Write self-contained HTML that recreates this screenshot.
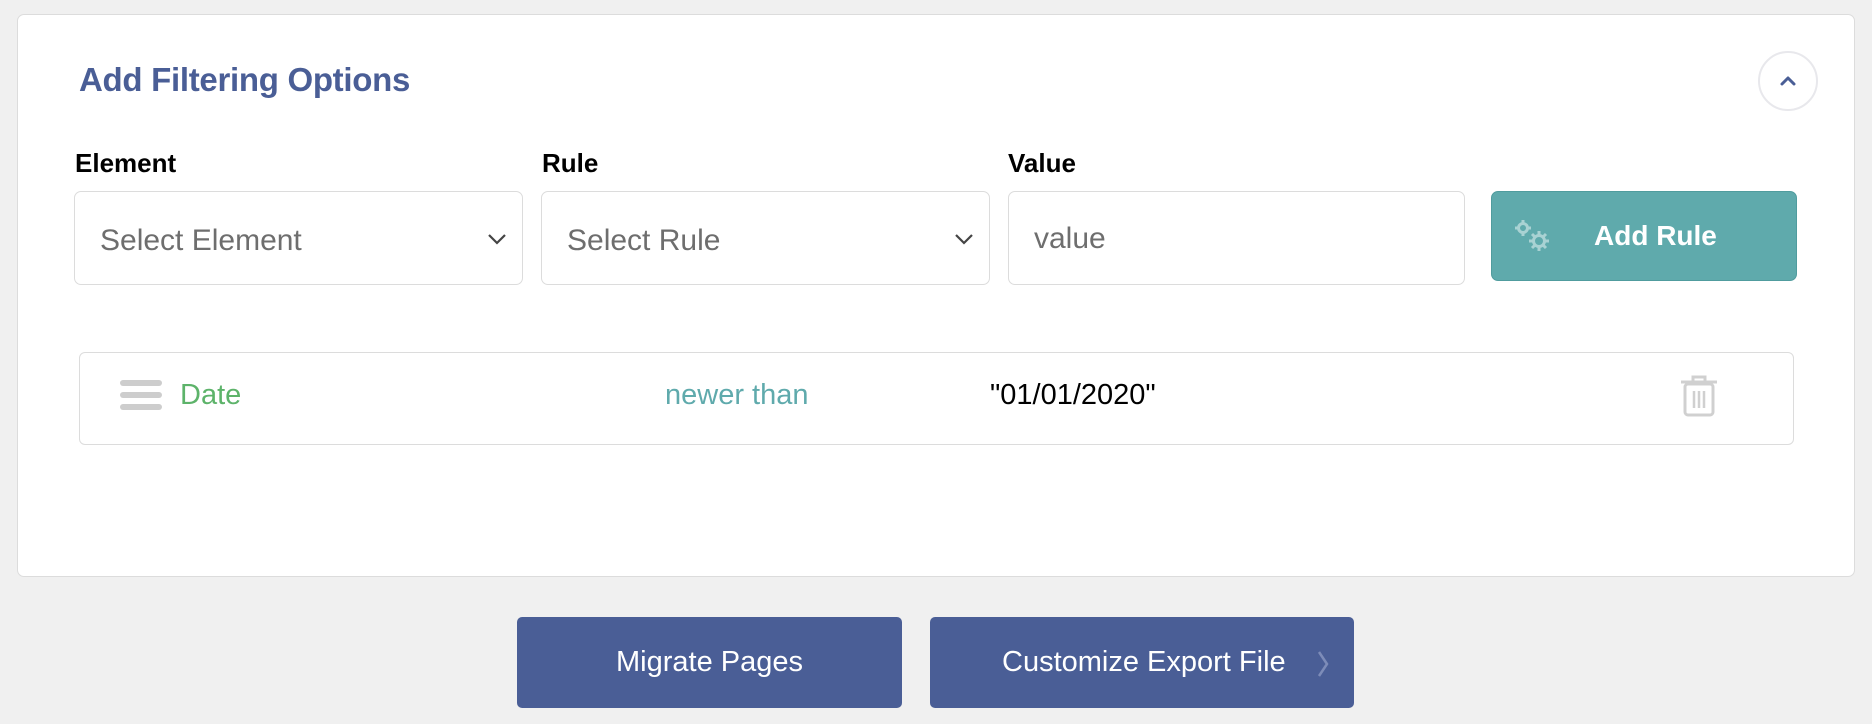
<!DOCTYPE html>
<html><head><meta charset="utf-8"><style>
*{box-sizing:border-box;margin:0;padding:0}
body{width:1872px;height:724px;background:#f0f0f0;font-family:"Liberation Sans",Arial,sans-serif;position:relative;overflow:hidden}
.card{position:absolute;left:17px;top:14px;width:1838px;height:563px;background:#fff;border:1px solid #dcdcdc;border-radius:7px}
.abs{position:absolute}
.title{left:79px;top:61px;font-size:33px;font-weight:bold;color:#4a5e96;letter-spacing:-0.3px}
.circ{left:1758px;top:51px;width:60px;height:60px;border:2px solid #e8e8ec;border-radius:50%}
.lbl{top:148px;font-size:26px;font-weight:bold;color:#000}
.box{top:191px;height:94px;border:1.5px solid #dcdcdc;border-radius:7px;background:#fff;font-size:30px;color:#6e6e6e;line-height:98px;padding-left:25px}
.btn{top:191px;left:1491px;width:306px;height:90px;background:#5faaac;border:1.5px solid #509c9e;border-radius:7px;color:#fff;font-weight:bold;font-size:28px;line-height:87px}
.row{left:79px;top:352px;width:1715px;height:93px;border:1.5px solid #dcdcdc;border-radius:6px;background:#fff}
.bar{left:120px;width:42px;height:6px;border-radius:3px;background:#cdcdcd}
.rt{top:378px;font-size:29px;line-height:34px}
.bb{top:617px;height:91px;background:#4a5e96;border-radius:5px;color:#fff;font-size:29px;line-height:91px;text-align:center}
</style></head><body>
<div class="card"></div>
<div class="abs title">Add Filtering Options</div>
<div class="abs circ"><svg width="56" height="56" style="position:absolute;left:0;top:0"><path d="M22 31 L28 25 L34 31" fill="none" stroke="#4a5e96" stroke-width="3" stroke-linecap="round" stroke-linejoin="round"/></svg></div>
<div class="abs lbl" style="left:75px">Element</div>
<div class="abs lbl" style="left:542px">Rule</div>
<div class="abs lbl" style="left:1008px">Value</div>
<div class="abs box" style="left:74px;width:449px">Select Element<svg class="abs" style="right:14px;top:40px" width="22" height="14"><path d="M3 3 L11 11 L19 3" fill="none" stroke="#444" stroke-width="2.2"/></svg></div>
<div class="abs box" style="left:541px;width:449px">Select Rule<svg class="abs" style="right:14px;top:40px" width="22" height="14"><path d="M3 3 L11 11 L19 3" fill="none" stroke="#444" stroke-width="2.2"/></svg></div>
<div class="abs box" style="left:1008px;width:457px;line-height:94px">value</div>
<div class="abs btn"><svg class="abs" style="left:20px;top:26px" width="46" height="36" viewBox="0 0 46 36"><g fill="none" stroke="#a9d2d3" stroke-width="3"><circle cx="11" cy="10" r="4.5"/><circle cx="27" cy="23" r="5.5"/></g><g stroke="#a9d2d3" stroke-width="3"><path d="M11 2v4M11 14v4M3 10h4M15 10h4"/><path d="M27 13v4M27 29v4M17 23h4M33 23h4M20 16l3 3M31 27l3 3M34 16l-3 3M20 30l3-3"/></g></svg><span class="abs" style="left:102px">Add Rule</span></div>
<div class="abs row"></div>
<div class="abs bar" style="top:380px"></div>
<div class="abs bar" style="top:392px"></div>
<div class="abs bar" style="top:404px"></div>
<div class="abs rt" style="left:180px;color:#5db36a">Date</div>
<div class="abs rt" style="left:665px;color:#5faaac">newer than</div>
<div class="abs rt" style="left:990px;color:#000">"01/01/2020"</div>
<svg class="abs" style="left:1678px;top:374px" width="42" height="44" viewBox="0 0 42 44"><g fill="none" stroke="#d0d0d0" stroke-width="3"><path d="M3 8h36M15 8V3h12v5"/><rect x="7" y="10" width="28" height="31" rx="3"/><path d="M16 17v17M21 17v17M26 17v17" stroke-width="2.5"/></g></svg>
<div class="abs bb" style="left:517px;width:385px">Migrate Pages</div>
<div class="abs bb" style="left:930px;width:424px;text-align:left;padding-left:72px">Customize Export File<svg class="abs" style="left:385px;top:32px" width="16" height="30"><path d="M4 3 L12 15 L4 27" fill="none" stroke="#7d8cb8" stroke-width="2.5"/></svg></div>
</body></html>
